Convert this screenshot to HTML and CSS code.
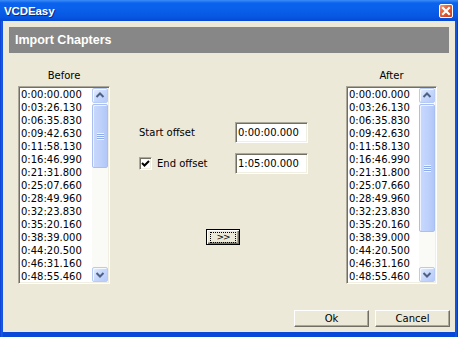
FILE: index.html
```html
<!DOCTYPE html>
<html>
<head>
<meta charset="utf-8">
<link rel="stylesheet" href="styles.css">
</head>
<body>
<div class="window">
  <div class="titlebar">
    <span class="title">VCDEasy</span>
    <div class="close">
      <svg width="12" height="12" viewBox="0 0 12 12"><path d="M3 3 L9 9 M9 3 L3 9" stroke="#fff" stroke-width="2.2" stroke-linecap="square"/></svg>
    </div>
  </div>
  <div class="client">
    <div class="header">Import Chapters</div>
    <div class="main">
      <div class="col col-left">
        <div class="col-label">Before</div>
        <div class="listbox">
          <ul class="items">
            <li>0:00:00.000</li><li>0:03:26.130</li><li>0:06:35.830</li><li>0:09:42.630</li><li>0:11:58.130</li><li>0:16:46.990</li><li>0:21:31.800</li><li>0:25:07.660</li><li>0:28:49.960</li><li>0:32:23.830</li><li>0:35:20.160</li><li>0:38:39.000</li><li>0:44:20.500</li><li>0:46:31.160</li><li>0:48:55.460</li>
          </ul>
          <div class="sbar">
            <div class="sbtn"><svg width="16" height="15" viewBox="0 0 16 15"><path d="M4.5 9 L8 5.5 L11.5 9" stroke="#4d6185" stroke-width="2" fill="none"/></svg></div>
            <div class="track">
              <div class="thumb thumb-left"><div class="grip"></div></div>
            </div>
            <div class="sbtn"><svg width="16" height="15" viewBox="0 0 16 15"><path d="M4.5 6 L8 9.5 L11.5 6" stroke="#4d6185" stroke-width="2" fill="none"/></svg></div>
          </div>
        </div>
      </div>
      <div class="middle">
        <div class="fields">
          <span class="flabel">Start offset</span>
          <div class="input">0:00:00.000</div>
          <label class="flabel check-row"><span class="checkbox"><svg width="9" height="9" viewBox="0 0 9 9"><path d="M1 4 L3.5 6.5 L8 2" stroke="#000" stroke-width="2" fill="none"/></svg></span>End offset</label>
          <div class="input">1:05:00.000</div>
        </div>
        <div class="movebtn"><span class="focus">&gt;&gt;</span></div>
      </div>
      <div class="col col-right">
        <div class="col-label">After</div>
        <div class="listbox">
          <ul class="items">
            <li>0:00:00.000</li><li>0:03:26.130</li><li>0:06:35.830</li><li>0:09:42.630</li><li>0:11:58.130</li><li>0:16:46.990</li><li>0:21:31.800</li><li>0:25:07.660</li><li>0:28:49.960</li><li>0:32:23.830</li><li>0:35:20.160</li><li>0:38:39.000</li><li>0:44:20.500</li><li>0:46:31.160</li><li>0:48:55.460</li>
          </ul>
          <div class="sbar">
            <div class="sbtn"><svg width="16" height="15" viewBox="0 0 16 15"><path d="M4.5 9 L8 5.5 L11.5 9" stroke="#4d6185" stroke-width="2" fill="none"/></svg></div>
            <div class="track">
              <div class="thumb thumb-right"><div class="grip"></div></div>
            </div>
            <div class="sbtn"><svg width="16" height="15" viewBox="0 0 16 15"><path d="M4.5 6 L8 9.5 L11.5 6" stroke="#4d6185" stroke-width="2" fill="none"/></svg></div>
          </div>
        </div>
      </div>
    </div>
    <div class="footer">
      <div class="btn">Ok</div>
      <div class="btn">Cancel</div>
    </div>
  </div>
</div>
</body>
</html>
```

FILE: styles.css
```css
html, body {
  margin: 0;
  padding: 0;
  background: #ffffff;
}
.window {
  width: 458px;
  height: 337px;
  box-sizing: border-box;
  padding: 0 3px 5px 3px;
  background: linear-gradient(90deg, #0a3fd0 0px, #1d5fe6 2px, #0a48d8 3px, #0848d8 455px, #1a5ee6 456px, #0034c0 458px);
  display: flex;
  flex-direction: column;
  font-family: "DejaVu Sans", sans-serif;
  font-size: 10px;
  color: #000;
}
.titlebar {
  height: 21px;
  margin: 0 -3px;
  padding: 0 5px 0 4px;
  display: flex;
  align-items: center;
  justify-content: space-between;
  background: linear-gradient(180deg, #3d8cf7 0px, #0a63ee 3px, #0a5fe9 10px, #0656e2 17px, #0449d6 21px);
}
.title {
  color: #fff;
  font-family: "Liberation Sans", sans-serif;
  font-weight: bold;
  font-size: 11.5px;
  letter-spacing: -0.1px;
  text-shadow: 1px 1px 0 #0a2a8a;
  padding-top: 1px;
}
.close {
  width: 12px;
  height: 12px;
  border: 1px solid #fff;
  border-radius: 2px;
  background: linear-gradient(135deg, #f09a7a 0%, #e35a32 45%, #c8401c 100%);
  display: flex;
  align-items: center;
  justify-content: center;
}
.client {
  flex: 1;
  background: #ece9d8;
  display: flex;
  flex-direction: column;
}
.header {
  margin: 6px 6px 0 6px;
  height: 26px;
  background: #878787;
  color: #fff;
  font-family: "Liberation Sans", sans-serif;
  font-weight: bold;
  font-size: 12.5px;
  line-height: 26px;
  padding-left: 6px;
}
.main {
  display: flex;
  margin-top: 17px;
}
.col {
  display: flex;
  flex-direction: column;
}
.col-left {
  width: 92px;
  margin-left: 15px;
}
.col-right {
  width: 91px;
  margin-right: 18px;
}
.col-label {
  height: 16px;
  line-height: 12px;
  text-align: center;
}
.listbox {
  height: 198px;
  box-sizing: border-box;
  border-style: solid;
  border-width: 1px;
  border-color: #aca899 #ffffff #ffffff #aca899;
  box-shadow: inset 1px 1px 0 #716f64, inset -1px -1px 0 #f1efe2;
  padding: 1px;
  background: #fff;
  display: flex;
  overflow: hidden;
}
.items {
  list-style: none;
  margin: 0;
  padding: 0 0 0 1px;
  flex: 1;
  overflow: hidden;
}
.items li {
  height: 13px;
  line-height: 13px;
  white-space: nowrap;
}
.sbar {
  width: 16px;
  display: flex;
  flex-direction: column;
  background: #fafaf6;
}
.sbtn {
  height: 15px;
  box-sizing: border-box;
  border: 1px solid #b7cbf5;
  border-radius: 2px;
  background: linear-gradient(135deg, #e6eefd 0%, #c8d8fc 50%, #b6cafa 100%);
  box-shadow: inset 1px 1px 0 #f4f8ff;
  display: flex;
}
.sbtn svg {
  margin: -1px;
}
.track {
  flex: 1;
  padding: 1px 0;
  display: flex;
  flex-direction: column;
}
.thumb {
  box-sizing: border-box;
  border: 1px solid #a9bff3;
  border-radius: 2px;
  background: linear-gradient(90deg, #c9d9fd 0%, #bdd0fb 60%, #b2c7f8 100%);
  box-shadow: inset 1px 1px 0 #eef4ff;
  display: flex;
  align-items: center;
  justify-content: center;
}
.thumb-left {
  height: 64px;
}
.thumb-right {
  height: 128px;
}
.grip {
  width: 7px;
  height: 7px;
  background: repeating-linear-gradient(180deg, #eef4fe 0px, #eef4fe 1px, #8cabe8 1px, #8cabe8 2px);
}
.middle {
  flex: 1;
  padding-top: 52px;
  padding-left: 29px;
  display: flex;
  flex-direction: column;
}
.fields {
  display: grid;
  grid-template-columns: 96px 73px;
  grid-auto-rows: 21px;
  row-gap: 10px;
  align-items: center;
}
.flabel {
  white-space: nowrap;
}
.check-row {
  display: flex;
  align-items: center;
  gap: 5px;
}
.checkbox {
  width: 13px;
  height: 13px;
  box-sizing: border-box;
  border-style: solid;
  border-width: 1px;
  border-color: #aca899 #ffffff #ffffff #aca899;
  box-shadow: inset 1px 1px 0 #716f64, inset -1px -1px 0 #f1efe2;
  background: #fff;
  display: flex;
  align-items: center;
  justify-content: center;
}
.input {
  height: 21px;
  box-sizing: border-box;
  border-style: solid;
  border-width: 1px;
  border-color: #aca899 #ffffff #ffffff #aca899;
  box-shadow: inset 1px 1px 0 #716f64, inset -1px -1px 0 #f1efe2;
  background: #fff;
  padding-left: 2px;
  line-height: 19px;
  white-space: nowrap;
}
.movebtn {
  margin-top: 55px;
  margin-left: 67px;
  width: 34px;
  height: 16px;
  box-sizing: border-box;
  border: 1px solid #000;
  background: #ece9d8;
  box-shadow: inset 1px 1px 0 #fff, inset -1px -1px 0 #716f64, inset -2px -2px 0 #aca899;
  display: flex;
  align-items: center;
  justify-content: center;
}
.focus {
  border: 1px dotted #000;
  width: 24px;
  height: 9px;
  line-height: 9px;
  font-size: 9px;
  text-align: center;
  letter-spacing: -1px;
}
.footer {
  margin-top: 26px;
  display: flex;
  justify-content: flex-end;
  gap: 6px;
  padding-right: 5px;
}
.btn {
  width: 75px;
  height: 17px;
  box-sizing: border-box;
  border-style: solid;
  border-width: 1px;
  border-color: #ffffff #716f64 #716f64 #ffffff;
  box-shadow: inset -1px -1px 0 #aca899;
  background: #ece9d8;
  text-align: center;
  line-height: 15px;
}
```
